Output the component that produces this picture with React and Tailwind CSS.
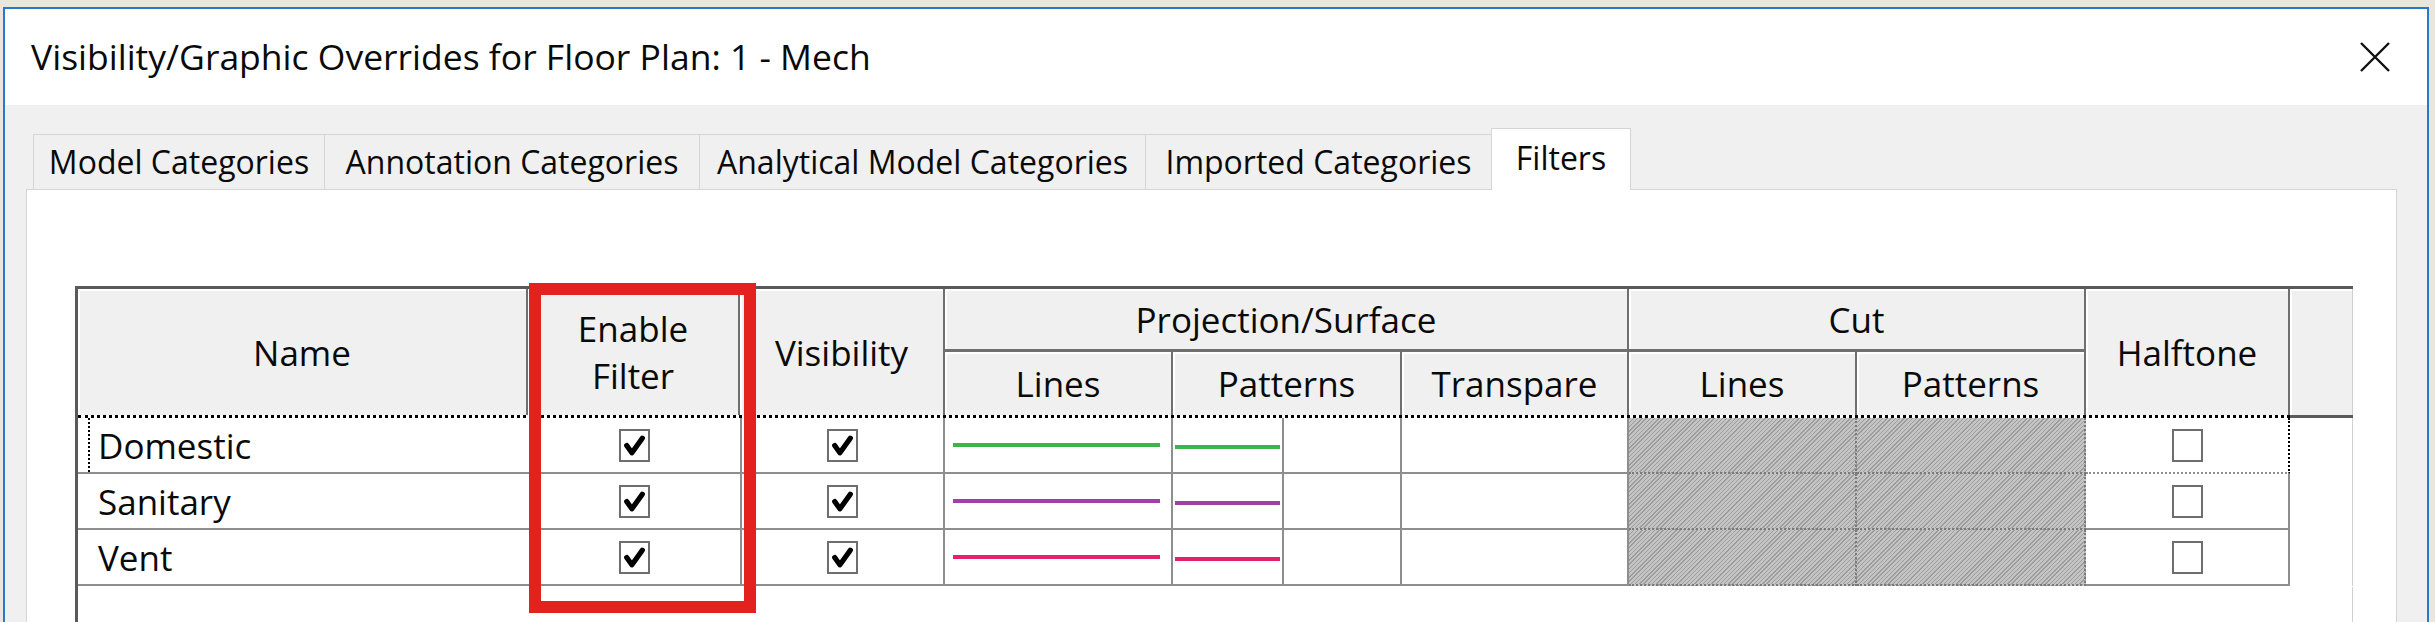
import React from "react";

function Check({ checked }) {
  return (
    <div className="w-[31px] h-[33px] border-2 border-[#6e6e6e] bg-white flex items-center justify-center">
      {checked && (
        <svg viewBox="0 0 24 24" className="w-[25px] h-[25px]">
          <path
            d="M4.5 12 L9.5 19 L19.5 5"
            fill="none"
            stroke="#000"
            strokeWidth="5"
            strokeLinecap="round"
            strokeLinejoin="round"
          />
        </svg>
      )}
    </div>
  );
}

const rows = [
  { name: "Domestic", color: "#3bb449" },
  { name: "Sanitary", color: "#a23ea6" },
  { name: "Vent", color: "#e5206f" },
];

const hatch =
  "bg-[repeating-linear-gradient(135deg,#9c9c9c_0px,#9c9c9c_1px,#c4c4c4_1px,#c4c4c4_3px)]";

function HeadCell({ className = "", children }) {
  return (
    <div
      className={
        "bg-[#f0f0f0] shadow-[inset_2px_2px_0_#ffffff] border-r-2 border-[#6f6f6f] flex items-center justify-center text-center " +
        className
      }
    >
      {children}
    </div>
  );
}

export default function App() {
  return (
    <div className="w-[2435px] h-[622px] overflow-hidden bg-[#ebe6dd] pt-[7px] pl-[3px] font-['Open_Sans','Noto_Sans',sans-serif] text-[#0a0a0a]">
      <div className="w-[2426px] h-[800px] border-x-2 border-t-2 border-[#2a78c9] bg-[#f0f0f0] flex flex-col">
        {/* Title bar */}
        <div className="h-[96px] shrink-0 bg-white flex items-center justify-between pl-[26px] pr-[36px]">
          <span className="text-[35.5px] leading-none">
            Visibility/Graphic Overrides for Floor Plan: 1 - Mech
          </span>
          <svg viewBox="0 0 32 30" className="w-[32px] h-[30px]">
            <path d="M2 1 L30 29 M30 1 L2 29" stroke="#111" strokeWidth="2.4" fill="none" />
          </svg>
        </div>

        {/* Body */}
        <div className="flex-1 pt-[22px] pl-[21px] pr-[30px] flex flex-col">
          {/* Tabs */}
          <div className="flex items-end pl-[7px] h-[62px] text-[32px] leading-none">
            <div className="w-[292px] h-[55px] border border-b-0 border-[#d5d5d5] bg-[#f0f0f0] flex items-center justify-center">
              Model Categories
            </div>
            <div className="w-[376px] h-[55px] -ml-px border border-b-0 border-[#d5d5d5] bg-[#f0f0f0] flex items-center justify-center">
              Annotation Categories
            </div>
            <div className="w-[447px] h-[55px] -ml-px border border-b-0 border-[#d5d5d5] bg-[#f0f0f0] flex items-center justify-center">
              Analytical Model Categories
            </div>
            <div className="w-[347px] h-[55px] -ml-px border border-b-0 border-[#d5d5d5] bg-[#f0f0f0] flex items-center justify-center">
              Imported Categories
            </div>
            <div className="relative z-10 w-[140px] h-[62px] -ml-px -mb-px border border-b-0 border-[#d5d5d5] bg-white flex items-center justify-center pb-[4px]">
              Filters
            </div>
          </div>

          {/* Panel */}
          <div className="flex-1 bg-white border border-[#d5d5d5] pl-[48px] pt-[96px]">
            <div className="relative w-[2278px] h-[600px] border-l-[3px] border-t-[3px] border-[#5a5a5a] text-[35px] leading-none">
              <div className="grid grid-cols-[450px_212px_205px_228px_229px_227px_228px_229px_204px_63px] grid-rows-[63px_63px_3px_56px_56px_56px]">
                {/* Header row 1 */}
                <HeadCell className="row-span-2">Name</HeadCell>
                <HeadCell className="row-span-2 flex-col leading-[47px]">
                  <span>Enable</span>
                  <span>Filter</span>
                </HeadCell>
                <HeadCell className="row-span-2">Visibility</HeadCell>
                <HeadCell className="col-span-3 border-b-[3px]">Projection/Surface</HeadCell>
                <HeadCell className="col-span-2 border-b-[3px]">Cut</HeadCell>
                <HeadCell className="row-span-2">Halftone</HeadCell>
                <div className="row-span-2 bg-[#f0f0f0] shadow-[inset_2px_2px_0_#ffffff] border-r border-[#d0d0d0]" />
                {/* Header row 2 */}
                <HeadCell>Lines</HeadCell>
                <HeadCell>Patterns</HeadCell>
                <HeadCell>Transpare</HeadCell>
                <HeadCell>Lines</HeadCell>
                <HeadCell>Patterns</HeadCell>
                {/* Dotted header bottom */}
                <div className="col-span-9 border-t-[3px] border-dotted border-black" />
                <div className="bg-[#5a5a5a]" />

                {/* Data rows */}
                {rows.map((r, i) => (
                  <React.Fragment key={r.name}>
                    <div className="border-b-2 border-[#8e8e8e] flex items-center pl-[10px] bg-white">
                      <div
                        className={
                          "h-full flex items-center pl-[8px] " +
                          (i === 0 ? "border-l-2 border-dotted border-black" : "border-l-2 border-transparent")
                        }
                      >
                        {r.name}
                      </div>
                    </div>
                    <div className="border-b-2 border-[#8e8e8e] flex items-center justify-center bg-white">
                      <Check checked />
                    </div>
                    <div className="border-x-2 border-b-2 border-[#8e8e8e] flex items-center justify-center bg-white">
                      <Check checked />
                    </div>
                    <div className="border-r-2 border-b-2 border-[#8e8e8e] flex items-center pl-[8px] pr-[11px] bg-white">
                      <div className="w-full h-[4px]" style={{ backgroundColor: r.color }} />
                    </div>
                    <div className="border-r-2 border-b-2 border-[#8e8e8e] flex bg-white">
                      <div className="w-[111px] border-r-2 border-[#8e8e8e] flex items-center pl-[2px] pr-[2px] pt-[4px]">
                        <div className="w-full h-[4px]" style={{ backgroundColor: r.color }} />
                      </div>
                    </div>
                    <div className="border-r-2 border-b-2 border-[#8e8e8e] bg-white" />
                    <div className={"border-r-2 border-b-2 border-dotted border-[#7a7a7a] " + hatch} />
                    <div className={"border-r-2 border-b-2 border-dotted border-[#7a7a7a] " + hatch} />
                    <div
                      className={
                        "border-b-2 border-[#8e8e8e] flex items-center justify-center bg-white border-r-2 " +
                        (i === 0 ? "border-r-black border-dotted border-b-solid" : "")
                      }
                    >
                      <Check />
                    </div>
                    <div className="bg-white border-r border-[#d0d0d0]" />
                  </React.Fragment>
                ))}
              </div>
              <div className="absolute right-0 top-[298px] bottom-0 w-px bg-[#d0d0d0]" />

              {/* Red highlight box */}
              <div className="absolute left-[451px] top-[-6px] w-[227px] h-[330px] border-[12px] border-[#e3211f]" />
            </div>
          </div>
        </div>
      </div>
    </div>
  );
}
